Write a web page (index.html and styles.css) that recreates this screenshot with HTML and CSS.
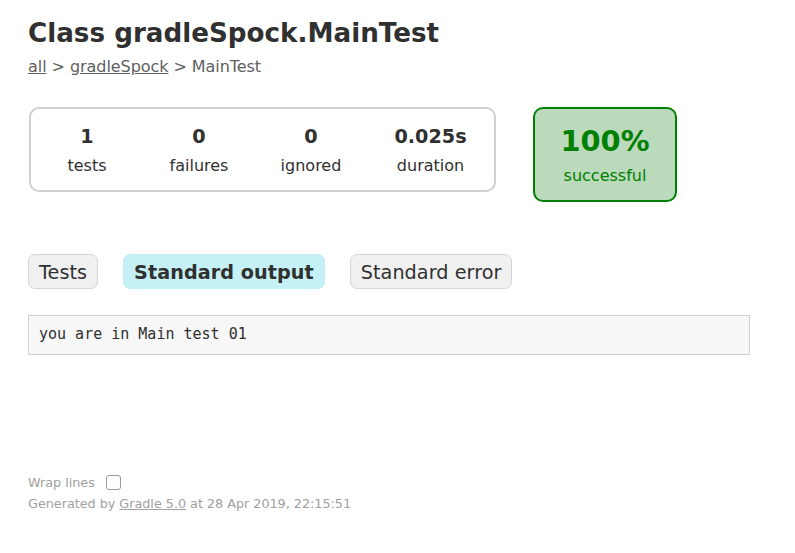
FILE: index.html
```html
<!DOCTYPE html>
<html>
<head>
<meta charset="utf-8">
<title>Test results - Class gradleSpock.MainTest</title>
<link rel="stylesheet" href="styles.css">
</head>
<body>
<div class="content">
  <h1 class="title">Class gradleSpock.MainTest</h1>
  <div class="breadcrumbs">
    <a href="#">all</a> &gt; <a href="#">gradleSpock</a> &gt; MainTest
  </div>

  <div class="summary">
    <div class="summary-group">
      <div class="info-box">
        <div class="counter">1</div>
        <p class="label">tests</p>
      </div>
      <div class="info-box">
        <div class="counter">0</div>
        <p class="label">failures</p>
      </div>
      <div class="info-box">
        <div class="counter">0</div>
        <p class="label">ignored</p>
      </div>
      <div class="info-box info-box-wide">
        <div class="counter">0.025s</div>
        <p class="label">duration</p>
      </div>
    </div>
    <div class="success-rate">
      <div class="percent">100%</div>
      <p class="label">successful</p>
    </div>
  </div>

  <ul class="tab-links">
    <li class="tab"><a href="#">Tests</a></li>
    <li class="tab tab-selected"><a href="#">Standard output</a></li>
    <li class="tab"><a href="#">Standard error</a></li>
  </ul>

  <pre class="code">you are in Main test 01</pre>

  <div class="footer">
    <div class="wrap-row">
      <span class="wrap-label">Wrap lines</span>
      <span class="checkbox"></span>
    </div>
    <div class="generated">Generated by <a href="#">Gradle 5.0</a> at 28 Apr 2019, 22:15:51</div>
  </div>
</div>
</body>
</html>
```

FILE: styles.css
```css
html, body {
  margin: 0;
  padding: 0;
  background: #ffffff;
}

body {
  font-family: "DejaVu Sans", sans-serif;
  font-size: 16px;
  color: #303030;
}

a {
  color: #303030;
}

.content {
  padding: 18px 28px 30px 28px;
}

.title {
  margin: 0;
  font-size: 26.2px;
  line-height: 30px;
  font-weight: bold;
  white-space: nowrap;
  color: #303030;
}

.breadcrumbs {
  margin-top: 9px;
  line-height: 19px;
  letter-spacing: -0.06px;
  color: #606060;
}

.breadcrumbs a {
  color: #606060;
}

.summary {
  display: flex;
  align-items: flex-start;
  margin-top: 31px;
  padding-left: 1px;
}

.summary-group {
  display: flex;
  border: 2px solid #d0d0d0;
  border-radius: 10px;
}

.info-box {
  width: 112px;
  padding: 17px 0 15px 0;
  text-align: center;
}

.info-box-wide {
  width: 127px;
}

.counter {
  font-size: 19.2px;
  line-height: 22px;
  font-weight: bold;
  margin-bottom: 8px;
}

.label {
  margin: 0;
  line-height: 19px;
}

.success-rate {
  width: 140px;
  margin-left: 37px;
  padding: 15px 0;
  text-align: center;
  border: 2px solid #008000;
  border-radius: 10px;
  background: #bbd9bb;
  color: #008000;
}

.percent {
  font-size: 28.8px;
  line-height: 34px;
  font-weight: bold;
  margin-bottom: 8px;
}

.tab-links {
  display: flex;
  gap: 25px;
  list-style: none;
  margin: 52px 0 0 0;
  padding: 0;
}

.tab {
  padding: 6px 10px 4px 10px;
  border: 1px solid #d4d4d4;
  border-radius: 7px;
  background: #f0f0f0;
}

.tab a {
  display: block;
  font-size: 19.2px;
  line-height: 23px;
  letter-spacing: 0.06px;
  text-decoration: none;
  color: #303030;
}

.tab-selected {
  background: #c5f0f5;
  border-color: #c5f0f5;
}

.tab-selected a {
  font-weight: bold;
}

.code {
  margin: 26px 0 0 0;
  width: 700px;
  padding: 9px 10px 11px 10px;
  border: 1px solid #d0d0d0;
  background: #f7f7f7;
  font-family: "DejaVu Sans Mono", monospace;
  font-size: 15px;
  line-height: 18px;
  color: #303030;
}

.footer {
  margin-top: 117px;
  font-size: 12.8px;
  color: #a0a0a0;
  white-space: nowrap;
  letter-spacing: -0.03px;
}

.footer a {
  color: #a0a0a0;
}

.wrap-row {
  display: flex;
  align-items: center;
  height: 21px;
}

.checkbox {
  display: inline-block;
  box-sizing: border-box;
  width: 15px;
  height: 15px;
  margin-left: 11px;
  border: 1px solid #9a9a9a;
  border-radius: 3px;
  background: #ffffff;
}

.generated {
  line-height: 21px;
}
```
